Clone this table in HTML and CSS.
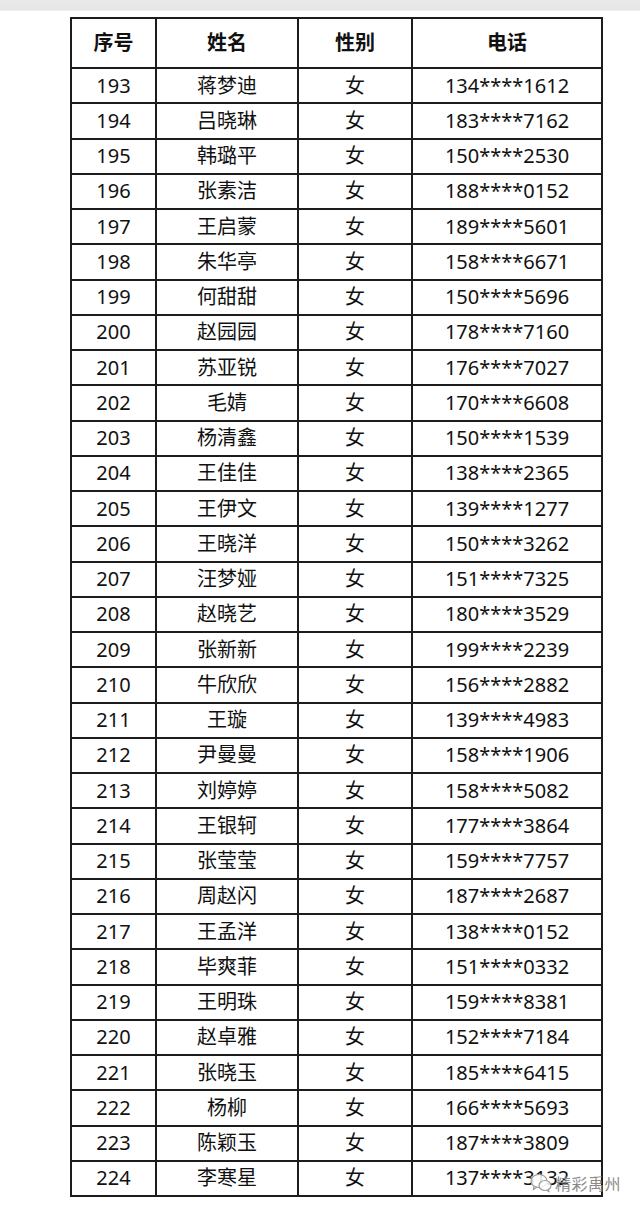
FILE: index.html
```html
<!DOCTYPE html>
<html lang="zh">
<head>
<meta charset="utf-8">
<link rel="stylesheet" href="styles.css">
</head>
<body>
<div class="topbar"></div>
<div class="sheet">
<table class="roster">
<colgroup><col class="c1"><col class="c2"><col class="c3"><col class="c4"></colgroup>
<thead>
<tr><th>序号</th><th>姓名</th><th>性别</th><th>电话</th></tr>
</thead>
<tbody>
<tr><td>193</td><td>蒋梦迪</td><td>女</td><td>134****1612</td></tr>
<tr><td>194</td><td>吕晓琳</td><td>女</td><td>183****7162</td></tr>
<tr><td>195</td><td>韩璐平</td><td>女</td><td>150****2530</td></tr>
<tr><td>196</td><td>张素洁</td><td>女</td><td>188****0152</td></tr>
<tr><td>197</td><td>王启蒙</td><td>女</td><td>189****5601</td></tr>
<tr><td>198</td><td>朱华亭</td><td>女</td><td>158****6671</td></tr>
<tr><td>199</td><td>何甜甜</td><td>女</td><td>150****5696</td></tr>
<tr><td>200</td><td>赵园园</td><td>女</td><td>178****7160</td></tr>
<tr><td>201</td><td>苏亚锐</td><td>女</td><td>176****7027</td></tr>
<tr><td>202</td><td>毛婧</td><td>女</td><td>170****6608</td></tr>
<tr><td>203</td><td>杨清鑫</td><td>女</td><td>150****1539</td></tr>
<tr><td>204</td><td>王佳佳</td><td>女</td><td>138****2365</td></tr>
<tr><td>205</td><td>王伊文</td><td>女</td><td>139****1277</td></tr>
<tr><td>206</td><td>王晓洋</td><td>女</td><td>150****3262</td></tr>
<tr><td>207</td><td>汪梦娅</td><td>女</td><td>151****7325</td></tr>
<tr><td>208</td><td>赵晓艺</td><td>女</td><td>180****3529</td></tr>
<tr><td>209</td><td>张新新</td><td>女</td><td>199****2239</td></tr>
<tr><td>210</td><td>牛欣欣</td><td>女</td><td>156****2882</td></tr>
<tr><td>211</td><td>王璇</td><td>女</td><td>139****4983</td></tr>
<tr><td>212</td><td>尹曼曼</td><td>女</td><td>158****1906</td></tr>
<tr><td>213</td><td>刘婷婷</td><td>女</td><td>158****5082</td></tr>
<tr><td>214</td><td>王银轲</td><td>女</td><td>177****3864</td></tr>
<tr><td>215</td><td>张莹莹</td><td>女</td><td>159****7757</td></tr>
<tr><td>216</td><td>周赵闪</td><td>女</td><td>187****2687</td></tr>
<tr><td>217</td><td>王孟洋</td><td>女</td><td>138****0152</td></tr>
<tr><td>218</td><td>毕爽菲</td><td>女</td><td>151****0332</td></tr>
<tr><td>219</td><td>王明珠</td><td>女</td><td>159****8381</td></tr>
<tr><td>220</td><td>赵卓雅</td><td>女</td><td>152****7184</td></tr>
<tr><td>221</td><td>张晓玉</td><td>女</td><td>185****6415</td></tr>
<tr><td>222</td><td>杨柳</td><td>女</td><td>166****5693</td></tr>
<tr><td>223</td><td>陈颖玉</td><td>女</td><td>187****3809</td></tr>
<tr><td>224</td><td>李寒星</td><td>女</td><td>137****3132</td></tr>
</tbody>
</table>
<div class="watermark">
<svg class="wm-icon" width="22" height="20" viewBox="0 0 22 20"><ellipse cx="9" cy="8" rx="8" ry="6.5" fill="rgba(255,255,255,0.85)" stroke="#9a9a9a" stroke-width="1.2"/><path d="M4 13 L3.5 16.5 L7 14" fill="none" stroke="#9a9a9a" stroke-width="1.2"/><ellipse cx="15" cy="12.5" rx="6" ry="5" fill="rgba(255,255,255,0.85)" stroke="#9a9a9a" stroke-width="1.2"/><path d="M18 17 L19.5 19 L17 17.6" fill="none" stroke="#9a9a9a" stroke-width="1.1"/></svg>
<span class="wm-text">精彩禹州</span>
</div>
</div>
</body>
</html>
```

FILE: styles.css
```css
html, body {
  margin: 0;
  padding: 0;
  background: #ffffff;
}
body {
  width: 640px;
  height: 1213px;
  overflow: hidden;
  font-family: "Noto Sans", "Noto Sans CJK SC", sans-serif;
  color: #111;
}
.topbar {
  height: 11px;
  background: linear-gradient(to bottom, #e9e9e9 0, #e6e6e6 85%, #f2f2f2 100%);
}
.sheet {
  position: relative;
  padding: 6px 0 0 70px;
}
.roster {
  border-collapse: collapse;
  width: 531px;
  table-layout: fixed;
  border: 2px solid #1c1c1c;
}
.c1 { width: 85px; }
.c2 { width: 142px; }
.c3 { width: 114px; }
.c4 { width: 190px; }
.roster th, .roster td {
  border: 2px solid #1c1c1c;
  text-align: center;
  padding: 0;
  line-height: 1;
}
.roster th {
  height: 48px;
  font-size: 20px;
  font-weight: 700;
}
.roster td {
  height: 33.25px;
  font-size: 20px;
  font-weight: 400;
}
.watermark {
  position: absolute;
  left: 530px;
  top: 1160px;
  display: flex;
  align-items: center;
  gap: 3px;
}
.wm-text {
  font-family: "Noto Sans CJK SC", sans-serif;
  font-size: 16px;
  color: #8a8a8a;
  letter-spacing: 0.5px;
}
```
